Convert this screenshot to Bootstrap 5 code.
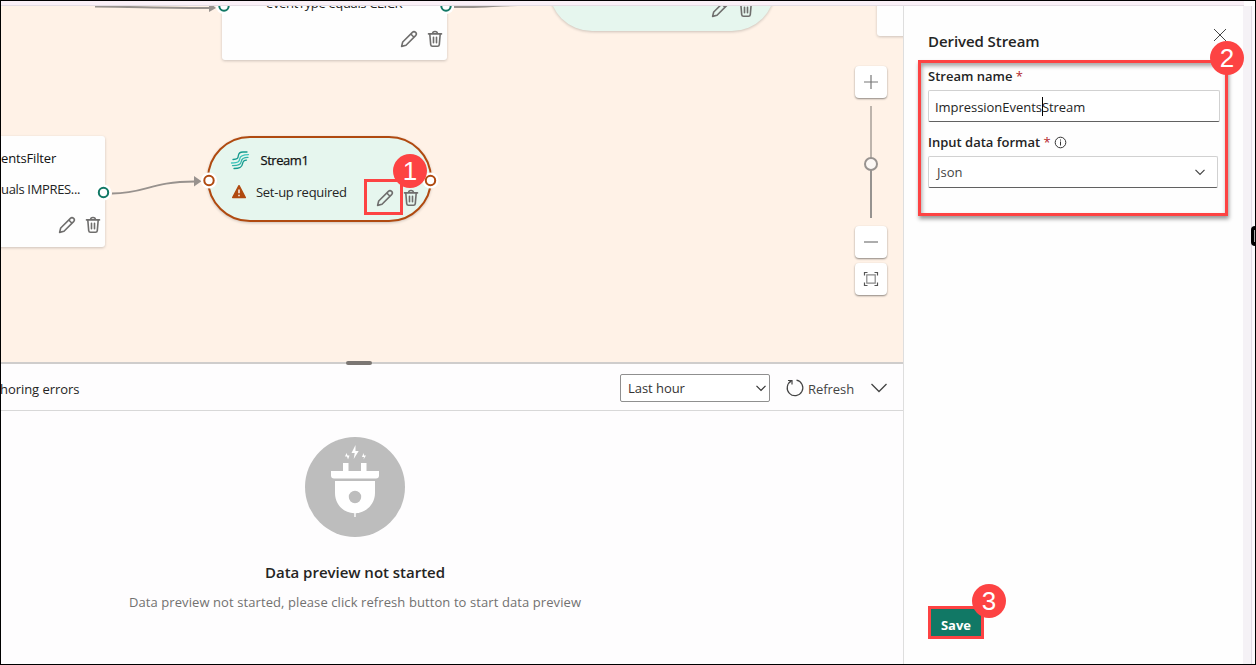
<!DOCTYPE html>
<html lang="en">
<head>
<meta charset="utf-8">
<title>Derived Stream</title>
<link rel="stylesheet" href="https://cdn.jsdelivr.net/npm/bootstrap@5.3.0/dist/css/bootstrap.min.css">
<style>
body{font-family:"Open Sans","Noto Sans",sans-serif;font-size:13px;line-height:20px;color:#242424;background:#fdfdfd}
.frame{width:1256px;height:665px;border:1px solid #000;background:#fefdfe}
.topstrip{height:5px;width:1243px;background:#faf0f7;border-bottom:1px solid #e4dde4}
.leftpane{width:903px;border-right:1px solid #dedede}
.canvas{height:356px;background:#fff2e7}
.plane{position:absolute;left:-1px;top:-6px;width:904px;height:363px}
.node{position:absolute;background:#fefefe;border-radius:3px;box-shadow:0 1px 3px rgba(0,0,0,.2)}
.pill{border-radius:43px;background:#e6f6ee}
.pill-warn{border:2px solid #b04a10}
.ln{position:absolute;white-space:nowrap;line-height:20px}
.tight{letter-spacing:-.28px}
.ico{position:absolute;color:#6f6e6d}
.zbtn{position:absolute;width:32px;height:32px;left:855px;background:#fff;border:0;border-radius:4px;box-shadow:0 1px 2px rgba(0,0,0,.45);color:#777}
.splitter{height:2px;background:#cfcdcc}
.grip{position:absolute;left:345px;top:-1px;width:26px;height:4px;border-radius:2px;background:#7b7673}
.pvhead{height:47px;border-bottom:1px solid #d8d8d8;padding:1px 14px 0 0}
.timebox{width:150px;height:28px;border:1px solid #8f8f8f;border-radius:2px;background:#fff;color:#333}
.pvbody{padding-top:26px}
.pvtitle{font-size:15px;font-weight:600;margin-top:25px;line-height:20px;color:#252423;letter-spacing:-.02px}
.pvsub{color:#727170;margin-top:10px;line-height:20px;letter-spacing:.09px}
.panel{width:339px;background:#fefefe;padding:0 15px 0 14px;border-radius:0 6px 6px 0}
.gutter{width:8px;background:#f5f2f6}
.edge{width:3px;border-left:1px solid #e2dce5;background:#faf8fb;flex:1}
.ptitle{font-size:15px;font-weight:600;padding:25px 0 0 10px;height:54px;letter-spacing:-.07px}
.formbox{border:3px solid #fd4343;height:156px;width:310px;padding:3px 5px 0 7px;box-shadow:1px 3px 4px rgba(0,0,0,.4),inset 1px 3px 4px rgba(0,0,0,.35)}
.lab{font-weight:600;height:20px;font-size:13px}
.req{color:#b4262c;font-weight:400}
.field{height:32px;border:1px solid #d1d1d1;border-bottom-color:#616161;border-radius:2px;background:#fff;padding:1px 7px 0 6px}
.caret{position:absolute;width:1px;height:19px;background:#000;top:6px;left:113px}
.savebtn{width:56px;height:33px;border:3px solid #fd4343;border-radius:0;background:#117865;color:#fff;font-weight:700;font-size:13px;padding:5px 0 0;line-height:20px}
.callout-n{position:absolute;width:34px;height:34px;border-radius:50%;background:#fd4343;color:#fff;font:26px/35px "Liberation Sans",sans-serif;text-align:center;z-index:5}
.redbox{position:absolute;border:3px solid #fd4343}
.sidegrip{position:absolute;left:1250px;top:225px;width:5px;height:20px;background:#000;border-radius:4px 0 0 4px}
.sidegrip::after{content:"";position:absolute;left:3px;top:4px;width:1px;height:12px;background:#aaa}
</style>
<script src="https://cdn.jsdelivr.net/npm/bootstrap@5.3.0/dist/js/bootstrap.bundle.min.js"></script>
</head>
<body class="overflow-hidden">
<svg width="0" height="0" class="position-absolute">
  <symbol id="pencil" viewBox="0 0 18 18"><g fill="none" stroke="currentColor" stroke-width="1.600" stroke-linejoin="round"><path d="M1.600 16.400 2.700 12 12.400 2.400a2.200 2.200 0 0 1 3.200 3.200L6 15.300Z"/><path d="m10.800 4 3.200 3.200"/></g></symbol>
  <symbol id="trash" viewBox="0 0 18 18"><g fill="none" stroke="currentColor" stroke-width="1.600" stroke-linecap="round"><path d="M2.500 3.900h13M6.600 3.700a2.400 2.200 0 0 1 4.800 0M3.800 4l.9 10.600a1.800 1.800 0 0 0 1.800 1.600h5a1.800 1.800 0 0 0 1.800-1.600L14.200 4M7.500 7.300v5.500M10.500 7.300v5.500"/></g></symbol>
  <symbol id="chev" viewBox="0 0 16 16"><path d="m3.500 5.800 4.500 4.500 4.500-4.500" fill="none" stroke="currentColor" stroke-width="1.200"/></symbol>
</svg>
<div class="frame d-flex flex-column position-relative overflow-hidden">
  <div class="topstrip flex-shrink-0"></div>
  <div class="d-flex flex-grow-1">
    <div class="leftpane d-flex flex-column flex-shrink-0">
      <div class="canvas position-relative overflow-hidden flex-shrink-0">
        <div class="plane">
          <div class="node" style="left:222px;top:-40px;width:225px;height:100px"></div>
          <div class="ln" style="left:266px;top:-7px;letter-spacing:-.36px">eventType equals CLICK</div>
          <div class="node pill" style="left:549px;top:-55px;width:226px;height:86px"></div>
          <div class="node" style="left:877px;top:-20px;width:60px;height:56px"></div>
          <div class="node" style="left:-60px;top:136px;width:165px;height:111px"></div>
          <div class="ln" style="left:1px;top:148px;color:#111;letter-spacing:-.15px">entsFilter</div>
          <div class="ln" style="left:1px;top:179px;letter-spacing:-.34px">uals IMPRES...</div>
          <div class="node pill pill-warn" style="left:207px;top:136px;width:225px;height:86px"></div>
          <svg class="position-absolute" style="left:0;top:0" width="904" height="363" fill="none">
            <path d="M95 6.500C140 7 170 8 211 8" stroke="#98928e" stroke-width="2"/><path d="M209 2v10l7-4Z" fill="#98928e"/>
            <path d="M454 7h14c20 0 30-2 50-2" stroke="#98928e" stroke-width="2"/>
            <path d="M112 193.500C146 193.500 150 181.500 195 181.500" stroke="#98928e" stroke-width="2"/><path d="M194 176v10.500l7.500-5.200Z" fill="#98928e"/>
            <g fill="#fff"><circle cx="224" cy="6" r="8"/><circle cx="446" cy="6" r="8"/><circle cx="103.500" cy="192.500" r="8"/><circle cx="209" cy="180.500" r="8"/><circle cx="430.500" cy="180.500" r="8"/></g>
            <g stroke="#117865" stroke-width="2"><circle cx="224" cy="6" r="4.700"/><circle cx="446" cy="6" r="4.700"/><circle cx="103.500" cy="192.500" r="4.700"/></g>
            <g stroke="#b04a10" stroke-width="2"><circle cx="209" cy="180.500" r="4.700"/><circle cx="430.500" cy="180.500" r="4.700"/></g>
            <g stroke-width="1.300" stroke-linecap="round"><path d="M233 159.500c4.500 0 5-1.300 5.300-3.700s1.700-3.800 4.700-3.800h4" stroke="#159a8e"/><path d="M231.500 163c7.500 0 8-2 8.300-4.300s1.800-4.100 8.700-4.100" stroke="#3cc5bb"/><path d="M232.500 165.600c7.500 0 8.500-2 8.800-4.300s1.700-4 6.700-4" stroke="#2fb3a8"/><path d="M234 168.500c6.500 0 8-1.700 8.500-4.700s1.500-3.700 4-3.700" stroke="#159a8e"/></g>
            <path d="M239 185.700 245.300 197.500h-12.600Z" fill="#b04a10" stroke="#b04a10" stroke-width="1.500" stroke-linejoin="round"/><path d="M239 189.500v3.800M239 194.800v1.500" stroke="#fff" stroke-width="1.400"/>
            <path d="M871 106v54" stroke="#bdb4ac" stroke-width="2"/><path d="M871 168v50" stroke="#969390" stroke-width="2"/><circle cx="871" cy="164" r="6" fill="#fcf8f5" stroke="#989390" stroke-width="2"/>
          </svg>
          <svg class="ico" style="left:399.500px;top:30px" width="18" height="18"><use href="#pencil"/></svg>
          <svg class="ico" style="left:425.500px;top:30px" width="18" height="18"><use href="#trash"/></svg>
          <svg class="ico" style="left:711px;top:0" width="18" height="18"><use href="#pencil"/></svg>
          <svg class="ico" style="left:737px;top:0" width="18" height="18"><use href="#trash"/></svg>
          <svg class="ico" style="left:57.500px;top:216px" width="18" height="18"><use href="#pencil"/></svg>
          <svg class="ico" style="left:83.500px;top:216px" width="18" height="18"><use href="#trash"/></svg>
          <svg class="ico" style="left:375.500px;top:189px" width="18" height="18"><use href="#pencil"/></svg>
          <svg class="ico" style="left:402px;top:189px" width="18" height="18"><use href="#trash"/></svg>
          <div class="ln" style="left:260.500px;top:150px;color:#111;-webkit-text-stroke:.25px #111;letter-spacing:-.45px">Stream1</div>
          <div class="ln tight" style="left:256px;top:182px">Set-up required</div>
          <button class="zbtn p-0 d-flex" style="top:66px" aria-label="Zoom in"><svg class="m-auto" width="16" height="16"><path d="M8 1v14M1 8h14" stroke="currentColor" stroke-width="1.200"/></svg></button>
          <button class="zbtn p-0 d-flex" style="top:226px" aria-label="Zoom out"><svg class="m-auto" width="16" height="16"><path d="M1 8h14" stroke="currentColor" stroke-width="1.200"/></svg></button>
          <button class="zbtn p-0 d-flex" style="top:263px" aria-label="Fit to screen"><svg class="m-auto" width="16" height="16" fill="none" stroke="#555" stroke-width="1.200"><path d="M1.500 4.500v-3h3M11.500 1.500h3v3M14.500 11.500v3h-3M4.500 14.500h-3v-3"/><path d="M3.800 3.800h8.400v8.400H3.800Z" stroke="#888"/></svg></button>
          <div class="redbox" style="left:364px;top:179px;width:39px;height:36px"></div>
          <div class="callout-n" style="left:393px;top:154px">1</div>
        </div>
      </div>
      <div class="splitter position-relative flex-shrink-0"><div class="grip"></div></div>
      <div class="pvhead d-flex align-items-center flex-shrink-0">
        <span class="me-auto" style="padding-top:3px;margin-left:-1px;letter-spacing:-.05px">horing errors</span>
        <div class="timebox d-flex align-items-center justify-content-between ps-2"><span style="margin-left:-1px;letter-spacing:-.05px">Last hour</span><svg width="16" height="16" class="me-0"><use href="#chev"/></svg></div>
        <svg width="20" height="20" viewBox="0 0 20 20" style="margin-left:15px" fill="none" stroke="#444" stroke-width="1.200"><path d="M11.500 2.200a7.800 7.800 0 1 1-5 .7"/><path d="M3 2.500h4v4"/></svg>
        <span style="padding-top:3px;margin-left:3px;width:47px;color:#444;letter-spacing:-.05px">Refresh</span>
        <svg width="20" height="20" viewBox="0 0 20 20" style="margin-left:14px"><path d="m2.500 6 7.500 7.500L17.500 6" fill="none" stroke="#444" stroke-width="1.300"/></svg>
      </div>
      <div class="pvbody d-flex flex-column align-items-center text-center" style="width:708px">
        <svg width="100" height="100" viewBox="0 0 100 100" fill="#fff"><circle cx="50" cy="50" r="50" fill="#bdbdbd"/><path d="M26 34h12v-8h5.500v8h12.500v-8h5.500v8H74v4.500a3 3 0 0 1-3 3H29a3 3 0 0 1-3-3Z"/><path fill-rule="evenodd" d="M30 44h40v12c0 10-7 17.500-15 19.500-2 .6-4 .8-4.300.8V80h-1.400v-3.700C39 76 30 68 30 56Zm20 9.800a6.200 6.200 0 1 0 0 12.400 6.200 6.200 0 0 0 0-12.400Z"/><path d="m50.500 8-4 8h3.200l-1 6 5-8h-3.200ZM41.500 16l-1.500 3.500h2l1 3 1.500-4h-2ZM58.500 16l-1.500 4h2l-.5 2.500 2.500-4h-2Z"/></svg>
        <div class="pvtitle"><span>Data preview not started</span></div>
        <div class="pvsub"><span>Data preview not started, please click refresh button to start data preview</span></div>
      </div>
    </div>
    <div class="panel d-flex flex-column flex-shrink-0 position-relative">
      <div class="ptitle d-flex justify-content-between"><span>Derived Stream</span></div>
      <svg class="position-absolute" style="left:309px;top:22px" width="14" height="14"><path d="m1 1 12 12M13 1 1 13" stroke="#444" stroke-width="1"/></svg>
      <div class="formbox">
        <div class="lab">Stream name <span class="req">*</span></div>
        <div class="field position-relative d-flex align-items-center" style="margin-top:4px"><span style="letter-spacing:-.04px">ImpressionEventsStream</span><i class="caret"></i></div>
        <div class="lab d-flex align-items-center" style="margin-top:10px"><span>Input data format <span class="req">*</span></span><svg width="13" height="13" style="margin-left:3px" fill="none" stroke="#333"><circle cx="6.500" cy="6.500" r="5.300"/><path d="M6.500 5.500v4M6.500 3.500v1.100"/></svg></div>
        <div class="field d-flex align-items-center justify-content-between" style="margin-top:4px;width:290px;padding-top:0;padding-right:9px;color:#444"><span style="padding-left:2px">Json</span><svg width="16" height="16"><use href="#chev"/></svg></div>
      </div>
      <button class="savebtn mt-auto" style="margin:0 0 25px 10px">Save</button>
    </div>
    <div class="gutter flex-shrink-0"></div>
    <div class="edge"></div>
  </div>
  <div class="callout-n" style="left:1209px;top:40px">2</div>
  <div class="callout-n" style="left:971px;top:583px">3</div>
  <div class="sidegrip"></div>
</div>
</body>
</html>
